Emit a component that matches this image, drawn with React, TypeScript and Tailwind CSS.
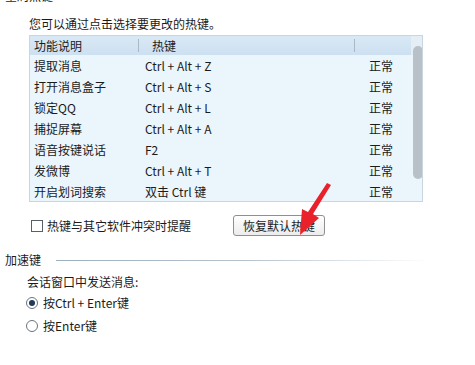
import React from "react";

const rows: [string, string][] = [
  ["提取消息", "Ctrl + Alt + Z"],
  ["打开消息盒子", "Ctrl + Alt + S"],
  ["锁定QQ", "Ctrl + Alt + L"],
  ["捕捉屏幕", "Ctrl + Alt + A"],
  ["语音按键说话", "F2"],
  ["发微博", "Ctrl + Alt + T"],
  ["开启划词搜索", "双击 Ctrl 键"],
];

export default function App() {
  return (
    <div
      className="relative w-[475px] h-[365px] overflow-hidden bg-white text-[12px] text-[#1b1b1b]"
      style={{ fontFamily: '"Noto Sans CJK SC", "Noto Sans", sans-serif' }}
    >
      <div className="mt-[-12px] pl-[5px] leading-[16px]">全局热键</div>
      <div className="mt-[12px] pl-[29px] leading-[16px]">您可以通过点击选择要更改的热键。</div>

      <div className="relative ml-[29px] mt-[3px] w-[394px] h-[167px] overflow-hidden border border-[#c8d6e2] bg-[#ebf5fc]">
        <div className="flex h-[19px] items-center bg-gradient-to-b from-[#d9e8f5] to-[#cde0f1] leading-[16px]">
          <div className="relative w-[108px] pl-[4px]">功能说明</div>
          <div className="h-[13px] w-px bg-[#aab8c4]" />
          <div className="w-[215px] pl-[13px]">热键</div>
          <div className="h-[13px] w-px bg-[#aab8c4]" />
          <div className="flex-1" />
          <div className="h-full w-[11px] bg-[#e6eef5]" />
        </div>
        {rows.map(([a, b]) => (
          <div key={a} className="flex h-[21px] items-center leading-[16px]">
            <div className="w-[115px] pl-[4px]">{a}</div>
            <div className="w-[224px]">{b}</div>
            <div>正常</div>
          </div>
        ))}
        <div className="absolute left-[383px] top-[10px] h-[133px] w-[10px] rounded-full bg-[#b9c1c8]" />
      </div>

      <div className="mt-[13px] flex h-[21px] items-center pl-[31px]">
        <div className="flex w-[202px] items-center leading-[16px]">
          <div className="h-[12px] w-[12px] border border-[#56606b] bg-white" />
          <span className="ml-[4px]">热键与其它软件冲突时提醒</span>
        </div>
        <div className="flex h-[21px] w-[92px] items-center justify-center rounded-[3px] border border-[#8e8f90] bg-gradient-to-b from-white to-[#ececec] leading-[16px]">
          恢复默认热键
        </div>
      </div>

      <div className="mt-[16px] flex items-center leading-[16px]">
        <span className="pl-[5px]">加速键</span>
        <div className="ml-[15px] h-px w-[374px] bg-gradient-to-r from-[#9fb0be] via-[#b4c2cd] to-[#ffffff]" />
      </div>

      <div className="mt-[6px] pl-[27px] leading-[16px]">会话窗口中发送消息:</div>

      <div className="mt-[5px] flex h-[16px] items-center pl-[26px] leading-[16px]">
        <div className="flex h-[12px] w-[12px] items-center justify-center rounded-full border border-[#6b747d] bg-white">
          <div className="h-[6px] w-[6px] rounded-full bg-[#1f3a5a]" />
        </div>
        <span className="ml-[5px]">按Ctrl + Enter键</span>
      </div>

      <div className="mt-[7px] flex h-[16px] items-center pl-[26px] leading-[16px]">
        <div className="h-[12px] w-[12px] rounded-full border border-[#6b747d] bg-white" />
        <span className="ml-[5px]">按Enter键</span>
      </div>

      <svg className="absolute left-0 top-0" width="475" height="365" viewBox="0 0 475 365">
        <path d="M331 185 L313 214 L319 218 L300 235 L302 209 L308 212 L327 183 Z" fill="#e8212a" />
      </svg>
    </div>
  );
}
